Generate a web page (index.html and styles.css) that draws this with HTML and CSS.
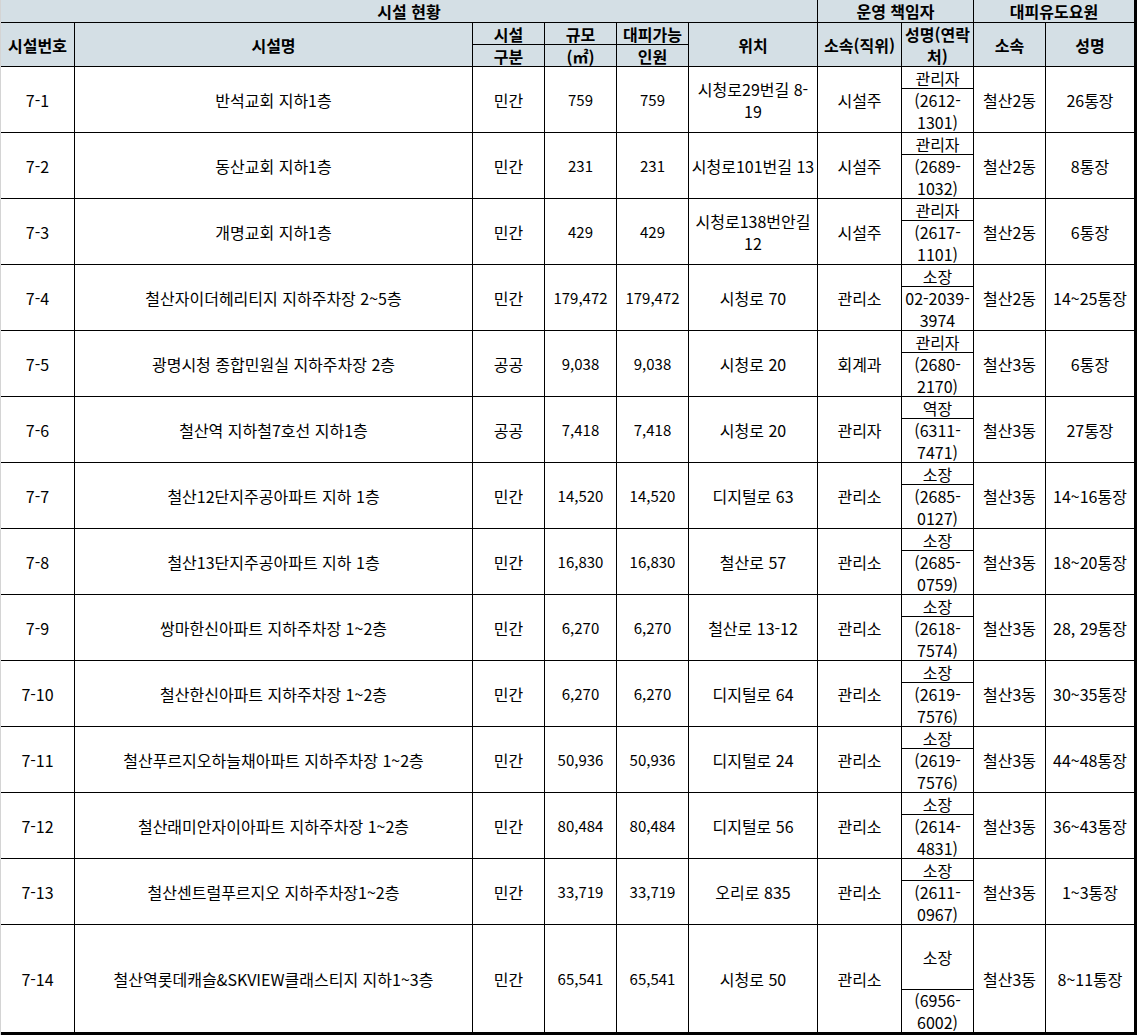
FILE: index.html
```html
<!DOCTYPE html>
<html lang="ko">
<head>
<meta charset="utf-8">
<title>시설 현황</title>
<link rel="stylesheet" href="styles.css">
</head>
<body>
<div class="sheet">
  <div class="cell head c6">시설 현황</div>
  <div class="cell head c2">운영 책임자</div>
  <div class="cell head c2">대피유도요원</div>

  <div class="cell head r2">시설번호</div>
  <div class="cell head r2">시설명</div>
  <div class="cell head">시설</div>
  <div class="cell head">규모</div>
  <div class="cell head">대피가능</div>
  <div class="cell head r2">위치</div>
  <div class="cell head r2">소속(직위)</div>
  <div class="cell head r2">성명(연락<br>처)</div>
  <div class="cell head r2">소속</div>
  <div class="cell head r2">성명</div>
  <div class="cell head">구분</div>
  <div class="cell head">(㎡)</div>
  <div class="cell head">인원</div>

  <div class="cell r3">7-1</div>
  <div class="cell r3">반석교회 지하1층</div>
  <div class="cell r3">민간</div>
  <div class="cell r3 num">759</div>
  <div class="cell r3 num">759</div>
  <div class="cell r3">시청로29번길 8-<br>19</div>
  <div class="cell r3">시설주</div>
  <div class="cell">관리자</div>
  <div class="cell r3">철산2동</div>
  <div class="cell r3">26통장</div>
  <div class="cell r2">(2612-<br>1301)</div>

  <div class="cell r3">7-2</div>
  <div class="cell r3">동산교회 지하1층</div>
  <div class="cell r3">민간</div>
  <div class="cell r3 num">231</div>
  <div class="cell r3 num">231</div>
  <div class="cell r3">시청로101번길 13</div>
  <div class="cell r3">시설주</div>
  <div class="cell">관리자</div>
  <div class="cell r3">철산2동</div>
  <div class="cell r3">8통장</div>
  <div class="cell r2">(2689-<br>1032)</div>

  <div class="cell r3">7-3</div>
  <div class="cell r3">개명교회 지하1층</div>
  <div class="cell r3">민간</div>
  <div class="cell r3 num">429</div>
  <div class="cell r3 num">429</div>
  <div class="cell r3">시청로138번안길<br>12</div>
  <div class="cell r3">시설주</div>
  <div class="cell">관리자</div>
  <div class="cell r3">철산2동</div>
  <div class="cell r3">6통장</div>
  <div class="cell r2">(2617-<br>1101)</div>

  <div class="cell r3">7-4</div>
  <div class="cell r3">철산자이더헤리티지 지하주차장 2~5층</div>
  <div class="cell r3">민간</div>
  <div class="cell r3 num">179,472</div>
  <div class="cell r3 num">179,472</div>
  <div class="cell r3">시청로 70</div>
  <div class="cell r3">관리소</div>
  <div class="cell">소장</div>
  <div class="cell r3">철산2동</div>
  <div class="cell r3">14~25통장</div>
  <div class="cell r2">02-2039-<br>3974</div>

  <div class="cell r3">7-5</div>
  <div class="cell r3">광명시청 종합민원실 지하주차장 2층</div>
  <div class="cell r3">공공</div>
  <div class="cell r3 num">9,038</div>
  <div class="cell r3 num">9,038</div>
  <div class="cell r3">시청로 20</div>
  <div class="cell r3">회계과</div>
  <div class="cell">관리자</div>
  <div class="cell r3">철산3동</div>
  <div class="cell r3">6통장</div>
  <div class="cell r2">(2680-<br>2170)</div>

  <div class="cell r3">7-6</div>
  <div class="cell r3">철산역 지하철7호선 지하1층</div>
  <div class="cell r3">공공</div>
  <div class="cell r3 num">7,418</div>
  <div class="cell r3 num">7,418</div>
  <div class="cell r3">시청로 20</div>
  <div class="cell r3">관리자</div>
  <div class="cell">역장</div>
  <div class="cell r3">철산3동</div>
  <div class="cell r3">27통장</div>
  <div class="cell r2">(6311-<br>7471)</div>

  <div class="cell r3">7-7</div>
  <div class="cell r3">철산12단지주공아파트 지하 1층</div>
  <div class="cell r3">민간</div>
  <div class="cell r3 num">14,520</div>
  <div class="cell r3 num">14,520</div>
  <div class="cell r3">디지털로 63</div>
  <div class="cell r3">관리소</div>
  <div class="cell">소장</div>
  <div class="cell r3">철산3동</div>
  <div class="cell r3">14~16통장</div>
  <div class="cell r2">(2685-<br>0127)</div>

  <div class="cell r3">7-8</div>
  <div class="cell r3">철산13단지주공아파트 지하 1층</div>
  <div class="cell r3">민간</div>
  <div class="cell r3 num">16,830</div>
  <div class="cell r3 num">16,830</div>
  <div class="cell r3">철산로 57</div>
  <div class="cell r3">관리소</div>
  <div class="cell">소장</div>
  <div class="cell r3">철산3동</div>
  <div class="cell r3">18~20통장</div>
  <div class="cell r2">(2685-<br>0759)</div>

  <div class="cell r3">7-9</div>
  <div class="cell r3">쌍마한신아파트 지하주차장 1~2층</div>
  <div class="cell r3">민간</div>
  <div class="cell r3 num">6,270</div>
  <div class="cell r3 num">6,270</div>
  <div class="cell r3">철산로 13-12</div>
  <div class="cell r3">관리소</div>
  <div class="cell">소장</div>
  <div class="cell r3">철산3동</div>
  <div class="cell r3">28, 29통장</div>
  <div class="cell r2">(2618-<br>7574)</div>

  <div class="cell r3">7-10</div>
  <div class="cell r3">철산한신아파트 지하주차장 1~2층</div>
  <div class="cell r3">민간</div>
  <div class="cell r3 num">6,270</div>
  <div class="cell r3 num">6,270</div>
  <div class="cell r3">디지털로 64</div>
  <div class="cell r3">관리소</div>
  <div class="cell">소장</div>
  <div class="cell r3">철산3동</div>
  <div class="cell r3">30~35통장</div>
  <div class="cell r2">(2619-<br>7576)</div>

  <div class="cell r3">7-11</div>
  <div class="cell r3">철산푸르지오하늘채아파트 지하주차장 1~2층</div>
  <div class="cell r3">민간</div>
  <div class="cell r3 num">50,936</div>
  <div class="cell r3 num">50,936</div>
  <div class="cell r3">디지털로 24</div>
  <div class="cell r3">관리소</div>
  <div class="cell">소장</div>
  <div class="cell r3">철산3동</div>
  <div class="cell r3">44~48통장</div>
  <div class="cell r2">(2619-<br>7576)</div>

  <div class="cell r3">7-12</div>
  <div class="cell r3">철산래미안자이아파트 지하주차장 1~2층</div>
  <div class="cell r3">민간</div>
  <div class="cell r3 num">80,484</div>
  <div class="cell r3 num">80,484</div>
  <div class="cell r3">디지털로 56</div>
  <div class="cell r3">관리소</div>
  <div class="cell">소장</div>
  <div class="cell r3">철산3동</div>
  <div class="cell r3">36~43통장</div>
  <div class="cell r2">(2614-<br>4831)</div>

  <div class="cell r3">7-13</div>
  <div class="cell r3">철산센트럴푸르지오 지하주차장1~2층</div>
  <div class="cell r3">민간</div>
  <div class="cell r3 num">33,719</div>
  <div class="cell r3 num">33,719</div>
  <div class="cell r3">오리로 835</div>
  <div class="cell r3">관리소</div>
  <div class="cell">소장</div>
  <div class="cell r3">철산3동</div>
  <div class="cell r3">1~3통장</div>
  <div class="cell r2">(2611-<br>0967)</div>

  <div class="cell r5">7-14</div>
  <div class="cell r5">철산역롯데캐슬&amp;SKVIEW클래스티지 지하1~3층</div>
  <div class="cell r5">민간</div>
  <div class="cell r5 num">65,541</div>
  <div class="cell r5 num">65,541</div>
  <div class="cell r5">시청로 50</div>
  <div class="cell r5">관리소</div>
  <div class="cell r3">소장</div>
  <div class="cell r5">철산3동</div>
  <div class="cell r5">8~11통장</div>
  <div class="cell r2">(6956-<br>6002)</div>
</div>
</body>
</html>
```

FILE: styles.css
```css
html, body {
  margin: 0;
  padding: 0;
  background: #ffffff;
}

body {
  font-family: "Malgun Gothic", "Noto Sans CJK KR", "Noto Sans", sans-serif;
  font-size: 16px;
  color: #000000;
}

.sheet {
  display: grid;
  width: 1137px;
  box-sizing: border-box;
  grid-template-columns: 73px 397px 71px 71px 71px 128px 83px 71px 71px 88px;
  grid-template-rows: 22px repeat(41, 21px) 21px 21px 20px 21px 20px;
  gap: 1px;
  background: #000000;
  border-left: 1px solid #d4d4d4;
  padding-right: 3px;
  padding-bottom: 3px;
}

.cell {
  display: flex;
  align-items: center;
  justify-content: center;
  text-align: center;
  background: #ffffff;
  line-height: 22px;
  white-space: nowrap;
  overflow: visible;
}

.num {
  font-size: 15px;
}

.head {
  background: #d4dfe5;
  font-weight: 700;
}

.c6 { grid-column: span 6; }
.c2 { grid-column: span 2; }
.r2 { grid-row: span 2; }
.r3 { grid-row: span 3; }
.r5 { grid-row: span 5; }
```
